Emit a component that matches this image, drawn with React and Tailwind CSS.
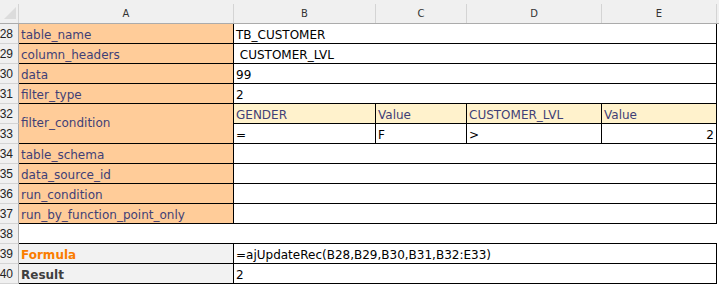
import React from "react";

const txt = "flex items-end pb-[1px] pl-[2px] text-[12px] leading-[14px] overflow-hidden whitespace-pre";

function RowNum({ n }) {
  return (
    <div className="bg-[#f0f0f0] border-r border-b border-r-[#ababab] border-b-[#d4d4d4] flex items-end justify-end pr-[5px] pb-[2px] text-[12px] leading-[14px] text-[#222] font-['Liberation_Sans'] overflow-hidden">
      {n}
    </div>
  );
}

function Label({ children }) {
  return (
    <div className={`${txt} bg-[#ffcc99] text-[#3f3f76] border-r border-b border-black`}>{children}</div>
  );
}

function Blank() {
  return <div className="bg-white" />;
}

function ColHead({ children }) {
  return (
    <div className="bg-[#f0f0f0] border-b border-[#ababab] flex">
      <div className="mt-[4px] flex-1 border-r border-[#d4d4d4] flex items-center justify-center text-[10px] text-[#333]">
        {children}
      </div>
    </div>
  );
}

export default function App() {
  const top = [
    [28, "table_name", "TB_CUSTOMER"],
    [29, "column_headers", " CUSTOMER_LVL"],
    [30, "data", "99"],
    [31, "filter_type", "2"],
  ];
  const mid = [
    [34, "table_schema"],
    [35, "data_source_id"],
    [36, "run_condition"],
    [37, "run_by_function_point_only"],
  ];
  return (
    <div className="w-[719px] h-[286px] bg-white overflow-hidden font-['DejaVu_Sans',sans-serif]">
      <div className="grid grid-cols-[19px_215px_142px_91px_135px_115px_2px] grid-rows-[24px_repeat(13,20px)]">
        {/* header */}
        <div className="bg-[#f0f0f0] border-b border-[#ababab] flex">
          <div className="mt-[4px] flex-1 border-r border-[#d4d4d4] flex items-end justify-end pr-[2px] pb-[4px]">
            <svg width="12" height="12" viewBox="0 0 12 12">
              <polygon points="12,0 12,12 0,12" fill="#dcdcdc" />
            </svg>
          </div>
        </div>
        <ColHead>A</ColHead>
        <ColHead>B</ColHead>
        <ColHead>C</ColHead>
        <ColHead>D</ColHead>
        <ColHead>E</ColHead>
        <div className="bg-[#f0f0f0] border-b border-[#ababab]" />

        {top.map(([n, l, v]) => (
          <React.Fragment key={n}>
            <RowNum n={n} />
            <Label>{l}</Label>
            <div className={`${txt} col-span-4 text-black border-r border-b border-black`}>{v}</div>
            <Blank />
          </React.Fragment>
        ))}

        {/* row 32 */}
        <RowNum n={32} />
        <div className="row-span-2 flex items-center pl-[2px] pb-[1px] text-[12px] leading-[14px] bg-[#ffcc99] text-[#3f3f76] border-r border-b border-black">
          filter_condition
        </div>
        <div className={`${txt} bg-[#fff2cc] text-[#3f3f76] border-r border-b border-black`}>GENDER</div>
        <div className={`${txt} bg-[#fff2cc] text-[#3f3f76] border-r border-b border-black`}>Value</div>
        <div className={`${txt} bg-[#fff2cc] text-[#3f3f76] border-r border-b border-black`}>CUSTOMER_LVL</div>
        <div className={`${txt} bg-[#fff2cc] text-[#3f3f76] border-r border-b border-black`}>Value</div>
        <Blank />

        {/* row 33 */}
        <RowNum n={33} />
        <div className={`${txt} text-black border-r border-b border-black`}>=</div>
        <div className={`${txt} text-black border-r border-b border-black`}>F</div>
        <div className={`${txt} text-black border-r border-b border-black`}>&gt;</div>
        <div className={`${txt} justify-end pr-[2px] text-black border-r border-b border-black`}>2</div>
        <Blank />

        {mid.map(([n, l]) => (
          <React.Fragment key={n}>
            <RowNum n={n} />
            <Label>{l}</Label>
            <div className="col-span-4 border-r border-b border-black" />
            <Blank />
          </React.Fragment>
        ))}

        {/* row 38 */}
        <RowNum n={38} />
        <div className="col-span-5 border-b border-black" />
        <Blank />

        {/* row 39 */}
        <RowNum n={39} />
        <div className={`${txt} bg-[#f2f2f2] text-[#fa7d00] font-bold border-r border-b border-black`}>Formula</div>
        <div className={`${txt} col-span-4 text-black border-r border-b border-black`}>=ajUpdateRec(B28,B29,B30,B31,B32:E33)</div>
        <Blank />

        {/* row 40 */}
        <RowNum n={40} />
        <div className={`${txt} bg-[#f2f2f2] text-[#3f3f3f] font-bold border-r border-b border-black`}>Result</div>
        <div className={`${txt} col-span-4 text-black border-r border-b border-black`}>2</div>
        <Blank />
      </div>
    </div>
  );
}
